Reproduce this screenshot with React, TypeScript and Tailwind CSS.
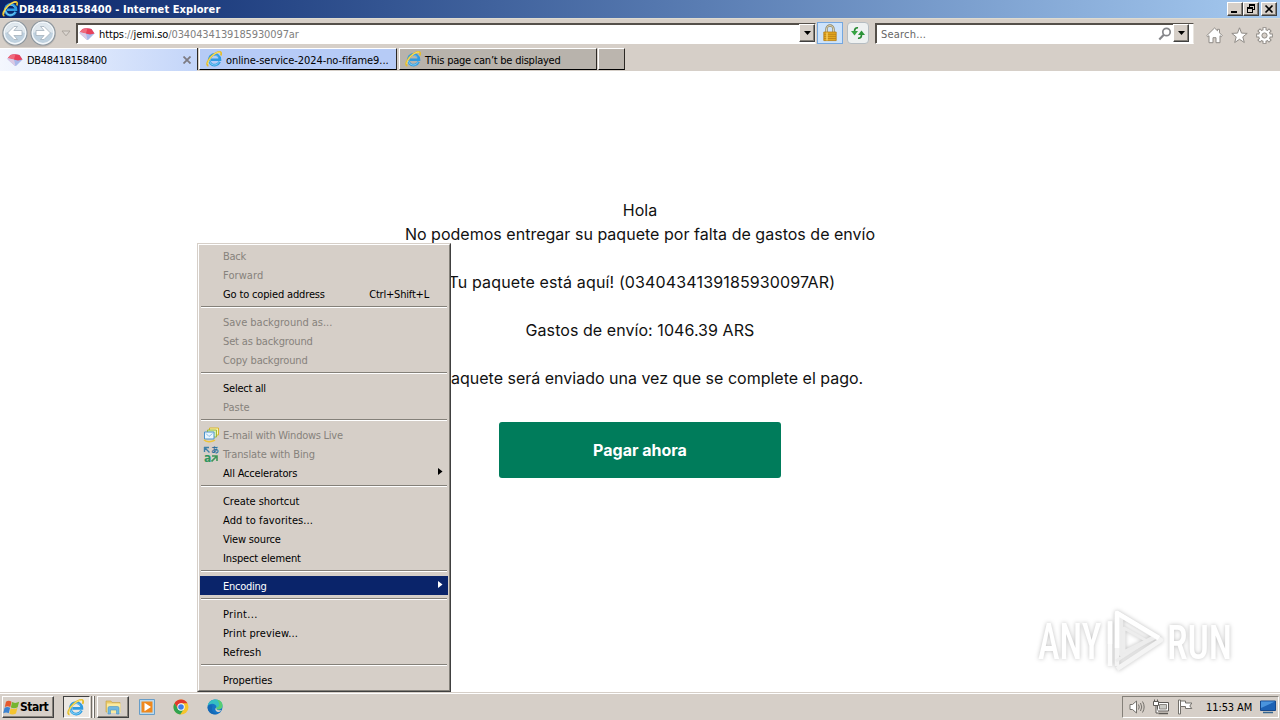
import type { ReactNode } from "react";
import clsx from "clsx";

type MenuEntry = {
  label: string;
  shortcut?: string;
  disabled?: boolean;
  active?: boolean;
  submenu?: boolean;
  icon?: ReactNode;
  tracking?: string;
};

const uiFont = "font-['DejaVu_Sans_Condensed','DejaVu_Sans',sans-serif] [font-stretch:condensed]";
const raised =
  "border border-t-white border-l-white border-r-[#404040] border-b-[#404040] shadow-[inset_-1px_-1px_0_#848079]";

function IeLogo({ className }: { className?: string }) {
  return (
    <svg className={className} viewBox="0 0 16 16" fill="none">
      <path d="M13.6 10.8A5.4 5.4 0 1 1 14 8.8H5" stroke="#2f9be0" strokeWidth="2.6" />
      <path d="M13 11.2A5 5 0 0 1 3.5 10" stroke="#7fd0f7" strokeWidth="1" />
      <path d="M4.2 6.5A5 5 0 0 1 12.5 6" stroke="#6ec5f3" strokeWidth="0.9" />
      <path
        d="M2.4 14.8C-.4 14.2 1.6 8.8 6 4.8 10 1.2 14.8-.6 15.2 2.2c.1.7-.1 1.5-.5 2.3"
        stroke="#e5bd2a"
        strokeWidth="1.7"
      />
      <path d="M1.9 13C1.7 10.5 4 7 7 4.2 9.8 1.8 12.6.7 14.2 1.3" stroke="#fdea7c" strokeWidth="0.8" />
    </svg>
  );
}

function GemIcon() {
  return (
    <svg className="h-4 w-4 shrink-0" viewBox="0 0 16 16">
      <path d="M3.5 3Q8 1.500 12.500 3L15.500 7.500 9.500 13.500Q8.500 14.500 7.500 13.500L.8 7.500Q.2 6.800.8 6z" fill="#a9b8ea" />
      <path d="M3.500 3Q8 1.500 12.500 3L15.500 7.500 11 8.500 .8 6.300z" fill="#e8405a" />
      <path d="M3.500 3Q6 2.100 8.500 2.200L7 7.300.8 6z" fill="#f0697d" />
      <path d="M.8 6L7 7.400l1.500 6.800-1-.7L.8 7.500Q.3 6.700.8 6z" fill="#dcc9e4" />
    </svg>
  );
}

function NavArrow({ forward }: { forward?: boolean }) {
  return (
    <svg className={clsx("h-[26px] w-[26px]", forward && "-scale-x-100")} viewBox="0 0 26 26">
      <circle cx="13" cy="13" r="12" fill="#b9c7d2" stroke="#8f989f" strokeWidth="1.2" />
      <circle cx="13" cy="13" r="10.7" fill="#bfd1df" stroke="#f3f7fa" strokeWidth="1.4" />
      <path d="M3 13a10 10 0 0 1 20 0c-6-2-14-2-20 0z" fill="#e0e8ee" />
      <path
        d="M5.5 13l6.5-6.5h3.5L11.9 10.5H20v5h-8.1l3.6 4H12z"
        fill="#fff"
        stroke="#a3b0bb"
        strokeWidth="0.8"
      />
    </svg>
  );
}

function DropButton() {
  return (
    <div className={clsx("flex h-[18px] w-4 shrink-0 items-center justify-center bg-[#d6cfc8]", raised)}>
      <svg className="h-1 w-[7px]" viewBox="0 0 7 4">
        <path d="M0 0h7L3.5 4z" fill="#000" />
      </svg>
    </div>
  );
}

function WindowButton({ children }: { children: ReactNode }) {
  return (
    <div className={clsx("flex h-[14px] w-4 items-center justify-center bg-[#d6cfc8]", raised)}>
      <svg className="h-[10px] w-3" viewBox="0 0 12 10" fill="none" stroke="#000" shapeRendering="crispEdges">
        {children}
      </svg>
    </div>
  );
}

function TitleBar() {
  return (
    <div className="flex h-[18px] items-center bg-linear-to-r from-[#0a246a] to-[#a6caf0] pr-[3px] pl-0.5">
      <IeLogo className="h-4 w-4" />
      <span className="mt-0.5 ml-[1px] text-[11px] font-bold tracking-[0.09px] whitespace-nowrap text-white">
        DB48418158400 - Internet Explorer
      </span>
      <div className="ml-auto flex">
        <WindowButton>
          <path d="M2 8h6" strokeWidth="2" />
        </WindowButton>
        <WindowButton>
          <path d="M4.5 1v2M9.5 1v5M4 1.5h6M4 .5h6M8 5.5h2M2.5 4v5M7.5 4v5M2 4.5h6M2 3.5h6M2 8.5h6" />
        </WindowButton>
        <div className="ml-0.5">
          <WindowButton>
            <path d="M2.5 1.5l7 7M9.5 1.5l-7 7" strokeWidth="1.7" shapeRendering="auto" />
          </WindowButton>
        </div>
      </div>
    </div>
  );
}

function NavBar() {
  return (
    <div className="flex h-[30px] items-start border-t border-[#dedbd0] pt-1">
      <div className="-mt-[3px] ml-0.5 flex h-[27px] gap-[2px] rounded-full bg-[#aaa6a1]/50">
        <NavArrow />
        <NavArrow forward />
      </div>
      <svg className="mt-[7px] ml-[5px] h-[7px] w-[10px]" viewBox="0 0 10 7">
        <path d="M1 1h8L5 5.8z" fill="#dad5cf" stroke="#aaa49d" />
      </svg>
      <div className="ml-[5px] flex h-[21px] w-[740px] border border-t-[#55504a] border-l-[#55504a] border-r-[#e9e5df] border-b-white bg-white">
        <div className="flex grow items-center border-t border-l border-[#55504a] pl-px">
          <GemIcon />
          <span className="mt-0.5 ml-1 text-[11px] tracking-[-0.12px] whitespace-nowrap text-[#808080]">
            <span className="text-black">https</span>://<span className="text-black">jemi.so</span>
            /0340434139185930097ar
          </span>
        </div>
        <DropButton />
      </div>
      <div className="-mt-px ml-[1px] flex h-[22px] w-[26px] items-center justify-center border border-[#74a7e0] bg-[#cde3fb]">
        <svg className="h-[18px] w-[14px]" viewBox="0 0 14 18">
          <path d="M3.5 9V5a3.5 3.5 0 0 1 7 0v4" fill="none" stroke="#8c8467" strokeWidth="2.4" />
          <path d="M3.5 9V5a3.5 3.5 0 0 1 7 0v4" fill="none" stroke="#e6deb8" strokeWidth="0.9" />
          <path d="M.8 8h12.4v8.6H.8z" fill="#e5a91f" stroke="#b57b13" strokeWidth="0.8" />
          <path d="M1 10.3h12M1 12.4h12M1 14.5h12" stroke="#b87f16" strokeWidth="0.8" />
          <path d="M3 8.5h2v8H3z" fill="#f6cf62" fillOpacity=".7" />
        </svg>
      </div>
      <div className="-mt-px ml-1 flex h-[22px] w-[22px] items-center justify-center rounded-sm border border-[#b6bdc2] bg-[#eef1f1]">
        <svg className="h-4 w-4" viewBox="0 0 16 16" fill="none">
          <path d="M8 2.8C5.5 2.5 4.5 4 4.5 6.5" stroke="#278a32" strokeWidth="1.7" />
          <path d="M1 6h7l-3.5 4.6z" fill="#36a342" />
          <path d="M8 13.2c2.5.3 3.5-1.2 3.5-3.7" stroke="#278a32" strokeWidth="1.7" />
          <path d="M15 10H8l3.5-4.6z" fill="#2c9438" />
        </svg>
      </div>
      <div className="ml-1.5 flex h-[21px] w-[319px] items-start border border-t-[#55504a] border-l-[#55504a] border-r-[#e9e5df] border-b-white bg-white pr-1">
        <div className="flex h-full grow items-center border-t border-l border-[#55504a] pl-1">
          <span className="mt-0.5 text-[11px] tracking-[0.2px] text-[#666]">Search...</span>
          <svg className="mr-px ml-auto h-[14px] w-[14px]" viewBox="0 0 14 14" fill="none" stroke="#85868a">
            <circle cx="8.5" cy="5" r="3.7" strokeWidth="1.7" />
            <path d="M5.8 7.8L1.3 12.5" strokeWidth="2.2" />
          </svg>
        </div>
        <DropButton />
      </div>
      <div className="mt-1 ml-3 flex gap-2">
        <svg className="h-[17px] w-[17px]" viewBox="0 0 17 17" fill="#fff" stroke="#8f8b86">
          <path d="M8.5 1l3 2.8V2.3h2v3.5L16.3 8.7l-1 1-1.3-1v7h-4v-5H7v5H3v-7l-1.3 1-1-1z" />
        </svg>
        <svg className="h-[17px] w-[17px]" viewBox="0 0 17 17" fill="#fff" stroke="#8f8b86">
          <path d="M8.5.8l2 5.3 5.7.3-4.4 3.5 1.5 5.6-4.8-3.2-4.8 3.2 1.5-5.6L.8 6.4l5.7-.3z" />
        </svg>
        <svg className="h-[17px] w-[17px]" viewBox="0 0 17 17" fill="none">
          <g stroke="#8f8b86" strokeWidth="4">
            <path d="M8.5.2v16.6M.2 8.5h16.6M2.6 2.6l11.8 11.8M14.4 2.6L2.6 14.4" />
          </g>
          <circle cx="8.5" cy="8.5" r="6.3" fill="#8f8b86" />
          <g stroke="#fff" strokeWidth="2">
            <path d="M8.5 1.1v14.8M1.1 8.5h14.8M3.3 3.3l10.4 10.4M13.7 3.3L3.3 13.7" />
          </g>
          <circle cx="8.5" cy="8.5" r="5.4" fill="#fff" />
          <circle cx="8.5" cy="8.5" r="2.6" fill="#d6cfc8" stroke="#8f8b86" />
        </svg>
      </div>
    </div>
  );
}

function TabBar() {
  const inactive =
    "flex h-[22px] items-center border-t border-l border-r border-b border-t-white border-l-white border-r-[#2c2925] border-b-black";
  return (
    <div className="flex h-[23px] text-[11px] whitespace-nowrap">
      <div className="flex h-[23px] w-[197px] items-center border-t border-white bg-linear-to-r from-[#f4f7fe] to-[#c3d5f9] pl-[7px]">
        <GemIcon />
        <span className="mt-0.5 ml-1 tracking-[-0.3px]">DB48418158400</span>
        <svg className="mr-1.5 ml-auto h-2 w-2" viewBox="0 0 8 8" stroke="#7d7b82" strokeWidth="1.8">
          <path d="M.5.5l7 7M7.5.5l-7 7" />
        </svg>
      </div>
      <div className="h-[22px] w-px bg-[#2c2925]" />
      <div className={clsx(inactive, "ml-px w-[198px] bg-[#b6cbf6] pl-1.5")}>
        <IeLogo className="h-4 w-4" />
        <span className="mt-1 ml-1 tracking-[-0.07px]">online-service-2024-no-fifame9...</span>
      </div>
      <div className={clsx(inactive, "ml-0.5 w-[198px] bg-[#b8b3ac] pl-[5px]")}>
        <IeLogo className="h-4 w-4" />
        <span className="mt-1 ml-1 tracking-[-0.24px]">This page can’t be displayed</span>
      </div>
      <div className={clsx(inactive, "ml-px w-[27px] bg-[#bbb5ae]")} />
    </div>
  );
}

const mailIcon = (
  <svg className="h-4 w-4" viewBox="0 0 16 16" fill="none">
    <path d="M6.5 1h9v7h-9z" fill="#fff6b8" stroke="#d8b52c" />
    <path d="M4.5 3h9v7h-9z" fill="#d6efb5" stroke="#9cb93b" />
    <path d="M1.5 5h9.5v7H1.5z" fill="#eaf6ff" stroke="#4b92cb" />
    <path d="M3 6.5l3 3 3.5-3" stroke="#8bbce0" />
    <path d="M1 12.8c2 2.4 7 2.5 11 .4" stroke="#ecc43b" strokeWidth="1.5" />
  </svg>
);

// two glyphs, あ and a, with an arrow pointing at each
const translateIcon = (
  <div className="grid h-4 w-4 grid-cols-2 text-[8px] leading-2 font-bold">
    <svg className="h-[7px] w-[7px]" viewBox="0 0 7 7" stroke="#3f81a8" strokeWidth="1.4" fill="none">
      <path d="M1 1.5h5M1.5 1v5M1.5 1.5l5 5" />
    </svg>
    <span className="font-['Noto_Sans_CJK_JP',sans-serif] text-[#2f709c]">あ</span>
    <span className="pl-px text-[12px] text-[#2f9560]">a</span>
    <svg className="mt-px h-[7px] w-[7px]" viewBox="0 0 7 7" stroke="#3d9558" strokeWidth="1.6" fill="none">
      <path d="M.5 6.5l5-5M1 1h5v5" />
    </svg>
  </div>
);

const menuGroups: MenuEntry[][] = [
  [
    { label: "Back", disabled: true },
    { label: "Forward", disabled: true, tracking: "tracking-[0.08px]" },
    { label: "Go to copied address", shortcut: "Ctrl+Shift+L", tracking: "tracking-[-0.15px]" },
  ],
  [
    { label: "Save background as...", disabled: true, tracking: "tracking-[-0.02px]" },
    { label: "Set as background", disabled: true, tracking: "tracking-[-0.15px]" },
    { label: "Copy background", disabled: true, tracking: "tracking-[-0.15px]" },
  ],
  [{ label: "Select all" }, { label: "Paste", disabled: true, tracking: "tracking-[0px]" }],
  [
    { label: "E-mail with Windows Live", disabled: true, icon: mailIcon },
    { label: "Translate with Bing", disabled: true, icon: translateIcon, tracking: "tracking-[-0.12px]" },
    { label: "All Accelerators", submenu: true, tracking: "tracking-[-0.18px]" },
  ],
  [
    { label: "Create shortcut", tracking: "tracking-[-0.05px]" },
    { label: "Add to favorites...", tracking: "tracking-[0.1px]" },
    { label: "View source", tracking: "tracking-[-0.15px]" },
    { label: "Inspect element", tracking: "tracking-[-0.15px]" },
  ],
  [{ label: "Encoding", submenu: true, active: true }],
  [
    { label: "Print...", tracking: "tracking-[0.3px]" },
    { label: "Print preview...", tracking: "tracking-[0.1px]" },
    { label: "Refresh", tracking: "tracking-[0.15px]" },
  ],
  [{ label: "Properties", tracking: "tracking-[-0.05px]" }],
];

function MenuRow({ entry }: { entry: MenuEntry }) {
  return (
    <div
      className={clsx(
        "flex h-[19px] items-center pr-[5px]",
        entry.active && "bg-[#0a246a] text-white",
        entry.disabled && "text-[#86827c]",
      )}
    >
      <div className="flex w-[23px] shrink-0 pl-[3px]">{entry.icon}</div>
      <span className={clsx("pt-[3px]", entry.tracking ?? "tracking-[-0.25px]")}>{entry.label}</span>
      {entry.shortcut ? (
        <span className="mr-3.5 ml-auto pt-[3px] tracking-[-0.2px]">{entry.shortcut}</span>
      ) : null}
      {entry.submenu ? (
        <svg className="mb-0.5 ml-auto h-[7px] w-[5px]" viewBox="0 0 5 7" fill="currentColor">
          <path d="M0 0v7l4.5-3.5z" />
        </svg>
      ) : null}
    </div>
  );
}

function ContextMenu() {
  return (
    <div className="absolute top-[243px] left-[197px] w-[254px] border border-t-[#d6cfc8] border-l-[#d6cfc8] border-r-[#404040] border-b-[#404040] bg-[#d6cfc8] text-[11px] whitespace-nowrap">
      <div className="border border-t-white border-l-white border-r-[#848079] border-b-[#848079] p-px">
        {menuGroups.map((group, index) => (
          <div key={group[0].label}>
            {index > 0 ? <div className="mx-px mt-[3px] mb-1 h-0.5 border-t border-[#848079] bg-white" /> : null}
            {group.map((entry) => (
              <MenuRow key={entry.label} entry={entry} />
            ))}
          </div>
        ))}
      </div>
    </div>
  );
}

function PageContent() {
  return (
    <main className="h-[621px] bg-white pt-[127px] text-center font-[Inter,sans-serif] text-base leading-6 text-[#111]">
      <p>Hola</p>
      <p className="tracking-[0.02px]">No podemos entregar su paquete por falta de gastos de envío</p>
      <p className="mt-6 tracking-[0.14px]">¡Tu paquete está aquí! (0340434139185930097AR)</p>
      <p className="mt-6 tracking-[0.06px]">Gastos de envío: 1046.39 ARS</p>
      <p className="mt-6">Su paquete será enviado una vez que se complete el pago.</p>
      <button className="mt-8 h-14 w-[282px] rounded-[3px] bg-[#007c5b] font-bold text-white" type="button">
        Pagar ahora
      </button>
    </main>
  );
}

function Watermark() {
  return (
    <svg
      className="absolute top-[600px] left-[1030px] h-20 w-[220px] drop-shadow-[0_0_2px_rgba(0,0,0,0.25)]"
      viewBox="0 0 220 80"
    >
      <defs>
        <linearGradient id="fade" x1="0" y1="22" x2="0" y2="60" gradientUnits="userSpaceOnUse">
          <stop offset=".48" stopColor="#fff" />
          <stop offset=".5" stopColor="#efefef" />
        </linearGradient>
      </defs>
      <g fill="url(#fade)" fontFamily="Roboto, sans-serif" fontSize="49" fontWeight="500">
        <text transform="translate(8 59) scale(.75 1)">ANY</text>
        <text transform="translate(137 59) scale(.77 1)">RUN</text>
      </g>
      <g fill="none" strokeWidth="4.5" strokeLinejoin="round">
        <path d="M80 21v45" stroke="#fcfcfc" />
        <path d="M91 15v39l34-17" stroke="#ececec" />
        <path d="M87 66V13l44 27-44 29" stroke="#f4f4f4" />
        <path d="M87 48V13l42 25M80 44V22" stroke="#fff" />
        <path d="M94 52V28l23 13-31 20" stroke="#ededed" strokeWidth="3" />
      </g>
    </svg>
  );
}

function TrayIcons() {
  return (
    <div className="flex items-center gap-2">
      <svg className="h-4 w-4" viewBox="0 0 16 16" fill="none" stroke="#73706b">
        <path d="M1 5.5h2.5L7.5 2v12l-4-3.5H1z" fill="#fff" />
        <path d="M9.5 5.5q1.5 2.5 0 5M11.5 4q2.5 4 0 8M13.5 2.5q3.3 5.5 0 11" />
      </svg>
      <svg className="h-4 w-4" viewBox="0 0 16 16" fill="none" stroke="#5c5955">
        <path d="M4.5 3.5h11v8.5h-11z" fill="#fff" />
        <path d="M6.5 5.5h7v4.5h-7z" fill="#c9c9c4" stroke="#8a8782" />
        <path d="M5.5 14.5h9.5" strokeWidth="1.5" />
        <path d="M.5 2.5h5v4h-5zM1.5.5v2M4.5.5v2M3 6.5v7.5h2.5" fill="#fff" />
      </svg>
      <svg className="h-4 w-4" viewBox="0 0 16 16" fill="#fff" stroke="#73706b">
        <path d="M1.5 1v14h2V1z" />
        <path d="M3.5 2h5v2h6.3l-2 3 2 2.5H8.5v-2h-5z" />
      </svg>
    </div>
  );
}

function Taskbar() {
  return (
    <div className="flex h-7 border-t border-[#d6cfc8] bg-[#d6cfc8] shadow-[inset_0_1px_0_#fff]">
      <div className={clsx("mt-[3px] ml-0.5 flex h-[22px] w-[52px] items-center", raised)}>
        <svg className="h-[17px] w-[17px] shrink-0" viewBox="0 0 16 15">
          <path d="M2.8 2q2.5-1.7 5.2 0L6.9 7.1q-2.5-1.6-5.2 0z" fill="#e5592d" />
          <path d="M8.5 2.4q2.9 1.7 6.7-.3L13.8 7.3q-3.3 1.8-6.4.2z" fill="#76b52f" />
          <path d="M1.5 7.8q2.5-1.7 5.2 0l-1.3 5.2q-2.4-1.6-5.2 0z" fill="#3b82d0" />
          <path d="M7.2 8.2q2.9 1.7 6.4-.3L12.2 13.2q-3.2 1.8-6.2.2z" fill="#f4c430" />
        </svg>
        <span className="text-[12px] font-bold tracking-[-0.5px]">Start</span>
      </div>
      <div className="mt-[3px] ml-[9px] flex h-[22px] w-[27px] items-center justify-center border border-t-[#404040] border-l-[#404040] border-r-white border-b-white bg-[#ece8e3] pr-0.5">
        <IeLogo className="h-[17px] w-[17px]" />
      </div>
      <div className="mt-[3px] flex h-[22px] gap-px">
        <div className="w-0.5 border-r border-[#706c66]" />
        <div className="w-0.5 border-r border-[#706c66] bg-white" />
      </div>
      <div className={clsx("mt-[3px] ml-[2px] flex h-[22px] w-[32px] items-center justify-center", raised)}>
        <svg className="h-4 w-[17px]" viewBox="0 0 17 16">
          <path d="M1 2h5l1 1.5h8V13H1z" fill="#e9c969" stroke="#c39d3e" strokeWidth=".6" />
          <path d="M2 4.5h13.5V14H2z" fill="#faeaa0" />
          <path d="M3 15V9q0-1.5 1.5-1.5h8Q14 7.5 14 9v6h-2.5v-4h-6v4z" fill="#70b7df" stroke="#4b95c3" strokeWidth=".6" />
        </svg>
      </div>
      <svg className="mt-[6px] ml-[10px] h-4 w-4" viewBox="0 0 16 16">
        <path d="M.5.5h15v15H.5z" fill="#b9d9ef" stroke="#679dc8" />
        <path d="M2.5 2.5h11v11h-11z" fill="#ef881d" />
        <path d="M5.5 3.7v8.6L12 8z" fill="#fff" />
      </svg>
      <svg className="mt-[6px] ml-[18px] h-4 w-4" viewBox="0 0 16 16">
        <circle cx="8" cy="8" r="7.5" fill="#f6c52d" />
        <path d="M1.5 4.2A7.5 7.5 0 0 1 14.5 4.3H8L4.8 9.8z" fill="#e1382d" />
        <path d="M1.5 4.2A7.5 7.5 0 0 0 7.2 15.5L10.9 10 4.8 9.5z" fill="#30a350" />
        <circle cx="8" cy="8" r="3.7" fill="#fff" />
        <circle cx="8" cy="8" r="2.8" fill="#3e7ee8" />
      </svg>
      <svg className="mt-[6px] ml-[18px] h-4 w-4" viewBox="0 0 16 16">
        <circle cx="8" cy="8" r="7.5" fill="#1674c5" />
        <path d="M.6 7C1.5 2.5 5 .5 8.5.5c4 0 7 2.5 7 6 0 2.5-2 4-4.5 4-2 0-2.5-1-1.5-2C9.5 4.5 3.5 3.5.6 7z" fill="#35bfc2" />
        <path d="M10 .8c3.5.5 5.5 3 5.5 5.7 0 2.5-2 4-4.5 4-2 0-2.5-1-1.5-2 3 0 4-4 .5-7.7z" fill="#58cd72" />
        <path d="M9.5 8.5c-1 1.5.5 3.5 5 2.5-.8 1.2-1.5 1.7-2.5 2-3 .3-5-3-2.5-4.5z" fill="#d6cfc8" />
        <path d="M5.5 7c-2 4 1 7.5 5 8-6 1.5-10-2.5-9.9-7C2 5.8 4 5.5 5.5 7z" fill="#1568b5" />
      </svg>
      <div className="mt-[3px] mr-px ml-auto flex h-[22px] w-[157px] items-center border border-t-[#848079] border-l-[#848079] border-r-white border-b-white pl-1.5">
        <TrayIcons />
        <span className="mt-0.5 ml-[13px] text-[11px] tracking-[-0.1px] whitespace-nowrap">11:53 AM</span>
        <svg className="mr-0.5 ml-auto h-[14px] w-4 shrink-0" viewBox="0 0 16 14">
          <path d="M.5 1h15v9.5H.5z" fill="#1d62b5" stroke="#16488c" />
          <path d="M1 1.5h14L1 8z" fill="#4a94dd" />
          <path d="M3 12.5h10" stroke="#35658f" strokeWidth="1.5" />
        </svg>
      </div>
    </div>
  );
}

export default function App() {
  return (
    <div className={clsx("relative h-[720px] w-[1280px] overflow-hidden bg-[#d6cfc8] text-black", uiFont)}>
      <TitleBar />
      <NavBar />
      <TabBar />
      <PageContent />
      <Taskbar />
      <ContextMenu />
      <Watermark />
    </div>
  );
}
